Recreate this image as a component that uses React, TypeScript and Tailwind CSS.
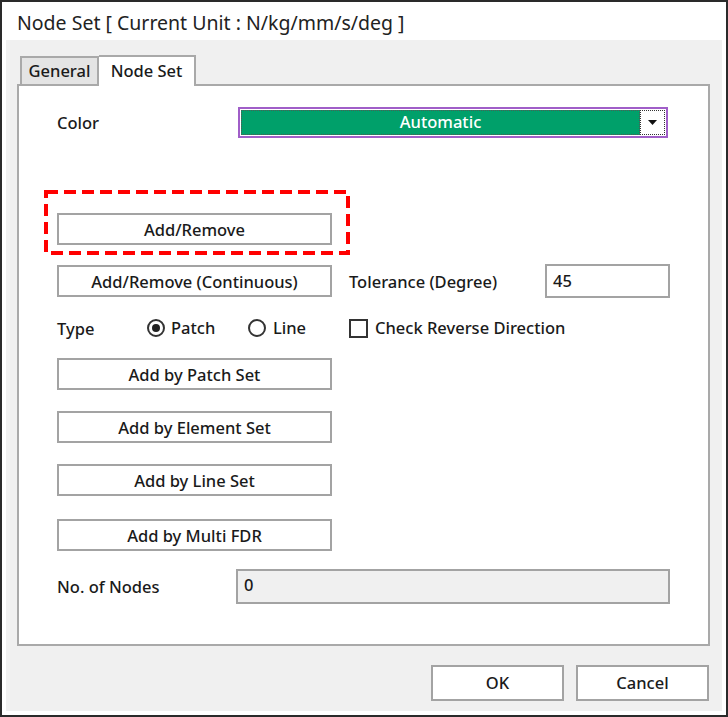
import React from "react";

const font = { fontFamily: '"Noto Sans", "Open Sans", sans-serif' };

function Btn({ label, className = "" }: { label: string; className?: string }) {
  return (
    <div
      className={
        "w-[275px] h-[32px] border-2 border-[#a3a3a3] bg-white flex items-center justify-center pt-[2px] text-[16.5px] font-medium text-[#1a1a1a] " +
        className
      }
    >
      {label}
    </div>
  );
}

export default function App() {
  return (
    <div
      className="w-[728px] h-[717px] border-2 border-[#2a2a2a] bg-white flex flex-col text-[#1a1a1a]"
      style={font}
    >
      <div className="h-[38px] pl-[15px] pt-[3px] flex items-center text-[19.5px] text-[#222]">
        Node Set [ Current Unit : N/kg/mm/s/deg ]
      </div>
      <div className="flex-1 mx-[4px] mb-[4px] bg-[#f0f0f0] flex flex-col pl-[11px] pr-[12px] pt-[14px] font-medium">
        {/* Tabs */}
        <div className="flex items-end h-[30px] pl-[3px]">
          <div className="w-[79px] h-[29px] border-2 border-b-0 border-[#a9a9a9] bg-[#e4e4e4] flex items-center justify-center text-[16.5px] -mb-[1px]">
            General
          </div>
          <div className="w-[97px] h-[31px] border-2 border-b-0 border-l-0 border-[#a9a9a9] bg-white flex items-center justify-center text-[16.5px] relative z-10 -mb-[2px]">
            Node Set
          </div>
        </div>
        {/* Panel */}
        <div className="h-[562px] border-2 border-[#a9a9a9] bg-white flex flex-col pl-[38px] pr-[38px] text-[16.5px]">
          {/* Color row */}
          <div className="flex items-center mt-[21px] h-[30px]">
            <div className="w-[181px] pt-[2px]">Color</div>
            <div className="w-[430px] h-[31px] border-2 border-[#a05ec8] p-[1px] flex">
              <div className="flex-1 bg-[#00a06a] border border-dotted border-[#555] flex items-center justify-center pt-[1px] text-white">
                Automatic
              </div>
              <div className="w-[25px] border border-dotted border-[#333] bg-white flex items-center justify-center">
                <svg width="9" height="5" viewBox="0 0 9 5">
                  <path d="M0 0 H9 L4.5 5 Z" fill="#111" />
                </svg>
              </div>
            </div>
          </div>

          {/* Add/Remove with annotation */}
          <div className="relative mt-[76px] w-[275px]">
            <Btn label="Add/Remove" />
            <svg
              className="absolute left-[-13px] top-[-23px] pointer-events-none"
              width="306"
              height="65"
              viewBox="0 0 306 65"
            >
              <rect
                x="2"
                y="2"
                width="302"
                height="61"
                fill="none"
                stroke="#ff0000"
                strokeWidth="4"
                strokeDasharray="12 6"
              />
            </svg>
          </div>

          {/* Continuous + tolerance */}
          <div className="flex items-center mt-[19px]">
            <Btn label="Add/Remove (Continuous)" />
            <div className="ml-[17px] w-[196px] pt-[2px]">Tolerance (Degree)</div>
            <div className="w-[125px] h-[34px] border-2 border-[#a3a3a3] bg-white pl-[6px] pt-[3px]">
              45
            </div>
          </div>

          {/* Type row */}
          <div className="flex items-center mt-[16px] h-[28px]">
            <div className="w-[90px] pt-[2px]">Type</div>
            <div className="flex items-center w-[101px]">
              <span className="w-[18px] h-[18px] rounded-full border-2 border-[#333] flex items-center justify-center mr-[6px]">
                <span className="w-[8px] h-[8px] rounded-full bg-[#222]" />
              </span>
              Patch
            </div>
            <div className="flex items-center w-[101px]">
              <span className="w-[18px] h-[18px] rounded-full border-2 border-[#333] mr-[7px]" />
              Line
            </div>
            <div className="flex items-center">
              <span className="w-[19px] h-[19px] border-2 border-[#333] bg-white mr-[7px]" />
              Check Reverse Direction
            </div>
          </div>

          <Btn label="Add by Patch Set" className="mt-[16px]" />
          <Btn label="Add by Element Set" className="mt-[21px]" />
          <Btn label="Add by Line Set" className="mt-[21px]" />
          <Btn label="Add by Multi FDR" className="mt-[23px]" />

          {/* No. of nodes */}
          <div className="flex items-center mt-[18px]">
            <div className="w-[179px] pt-[2px]">No. of Nodes</div>
            <div className="w-[434px] h-[35px] border-2 border-[#a3a3a3] bg-[#f0f0f0] pl-[6px] pt-[2px]">
              0
            </div>
          </div>
        </div>

        {/* Bottom buttons */}
        <div className="flex justify-end gap-[12px] mt-[19px] pr-[1px]">
          <div className="w-[133px] h-[36px] border-2 border-[#a3a3a3] bg-white flex items-center justify-center text-[16.5px]">
            OK
          </div>
          <div className="w-[133px] h-[36px] border-2 border-[#a3a3a3] bg-white flex items-center justify-center text-[16.5px]">
            Cancel
          </div>
        </div>
      </div>
    </div>
  );
}
